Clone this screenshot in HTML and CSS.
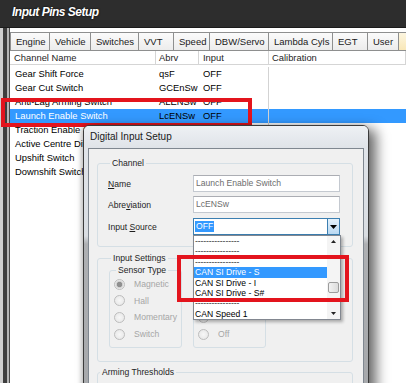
FILE: index.html
```html
<!DOCTYPE html>
<html lang="en">
<head>
<meta charset="utf-8">
<title>Input Pins Setup</title>
<link rel="stylesheet" href="styles.css">
</head>
<body>
<div class="app">
  <header class="topbar"><span class="apptitle">Input Pins Setup</span></header>
  <div class="main">
    <div class="frame-left"></div>
    <div class="content">
      <nav class="tabs">
        <span class="tab w-engine">Engine</span>
        <span class="tab w-vehicle">Vehicle</span>
        <span class="tab w-switches">Switches</span>
        <span class="tab w-vvt">VVT</span>
        <span class="tab w-speed">Speed</span>
        <span class="tab w-dbw">DBW/Servo</span>
        <span class="tab w-lambda">Lambda Cyls</span>
        <span class="tab w-egt">EGT</span>
        <span class="tab w-user">User</span>
        <span class="tab tab-hot w-more"></span>
      </nav>
      <div class="grid">
        <div class="ghead">
          <span class="hc h1">Channel Name</span>
          <span class="hc h2">Abrv</span>
          <span class="hc h3">Input</span>
          <span class="hc h4">Calibration</span>
        </div>
        <div class="grows">
          <div class="grow"><span class="c1">Gear Shift Force</span><span class="c2">qsF</span><span class="c3">OFF</span><span class="c4"></span></div>
          <div class="grow"><span class="c1">Gear Cut Switch</span><span class="c2">GCEnSw</span><span class="c3">OFF</span><span class="c4"></span></div>
          <div class="grow"><span class="c1">Anti-Lag Arming Switch</span><span class="c2">ALENSw</span><span class="c3">OFF</span><span class="c4"></span></div>
          <div class="grow selected"><span class="c1">Launch Enable Switch</span><span class="c2">LcENSw</span><span class="c3">OFF</span><span class="c4"></span></div>
          <div class="grow"><span class="c1">Traction Enable Switch</span><span class="c2"></span><span class="c3"></span><span class="c4"></span></div>
          <div class="grow"><span class="c1">Active Centre Diff Switch</span><span class="c2"></span><span class="c3"></span><span class="c4"></span></div>
          <div class="grow"><span class="c1">Upshift Switch</span><span class="c2"></span><span class="c3"></span><span class="c4"></span></div>
          <div class="grow"><span class="c1">Downshift Switch</span><span class="c2"></span><span class="c3"></span><span class="c4"></span></div>
        </div>
      </div>
    </div>
  </div>

  <div class="mark mark-row"></div>

  <section class="dialog">
    <div class="dlg-title">Digital Input Setup</div>
    <div class="dlg-client">
      <fieldset class="grp grp-channel">
        <legend>Channel</legend>
        <div class="frow r1"><span class="flabel"><u>N</u>ame</span><div class="tbox">Launch Enable Switch</div></div>
        <div class="frow r2"><span class="flabel">Abre<u>v</u>iation</span><div class="tbox">LcENSw</div></div>
        <div class="frow"><span class="flabel">Input <u>S</u>ource</span>
          <div class="combo">
            <span class="combo-val"><span class="sel">OFF</span></span>
            <span class="combo-btn"><svg width="7" height="4" viewBox="0 0 7 4"><path d="M0 0H7L3.5 4Z" fill="#000"/></svg></span>
          </div>
        </div>
      </fieldset>
      <fieldset class="grp grp-input">
        <legend>Input Settings</legend>
        <div class="subgroups">
          <fieldset class="grp sub">
            <legend>Sensor Type</legend>
            <div class="radio"><span class="rc checked"></span>Magnetic</div>
            <div class="radio"><span class="rc"></span>Hall</div>
            <div class="radio"><span class="rc"></span>Momentary</div>
            <div class="radio"><span class="rc"></span>Switch</div>
          </fieldset>
          <fieldset class="grp sub">
            <legend class="blank-legend"></legend>
            <div class="radio"><span class="rc"></span></div>
            <div class="radio"><span class="rc"></span></div>
            <div class="radio"><span class="rc"></span></div>
            <div class="radio"><span class="rc"></span>Off</div>
          </fieldset>
        </div>
      </fieldset>
      <fieldset class="grp grp-arm">
        <legend>Arming Thresholds</legend>
      </fieldset>
    </div>

    <div class="dropdown">
      <ul class="dd-items">
        <li class="dash">----------------</li>
        <li class="dash">----------------</li>
        <li class="dash">----------------</li>
        <li class="hl">CAN SI Drive - S</li>
        <li>CAN SI Drive - I</li>
        <li>CAN SI Drive - S#</li>
        <li class="dash">----------------</li>
        <li>CAN Speed 1</li>
      </ul>
      <div class="dd-scroll">
        <span class="sarrow"><svg width="5" height="3" viewBox="0 0 5 3"><path d="M0 3H5L2.5 0Z" fill="#222"/></svg></span>
        <span class="strack"><span class="thumb"></span></span>
        <span class="sarrow"><svg width="5" height="3" viewBox="0 0 5 3"><path d="M0 0H5L2.5 3Z" fill="#222"/></svg></span>
      </div>
    </div>
  </section>

  <div class="mark mark-list"></div>
</div>
</body>
</html>
```

FILE: styles.css
```css
* { box-sizing: border-box; margin: 0; padding: 0; }
html, body { width: 406px; height: 383px; overflow: hidden; background: #fff; }
body { font-family: Tahoma, "Liberation Sans", Arial, sans-serif; color: #111; }

.app { position: relative; width: 406px; height: 383px; overflow: hidden; }

/* top bar */
.topbar { height: 28px; background: #2d2d2d; border-bottom: 1px solid #1b1b1b; padding: 4px 0 0 12px; }
.apptitle { display: block; font: italic bold 12px/16px "Liberation Sans", Arial, sans-serif; letter-spacing: -0.5px; color: #fff; text-shadow: 0 0 2px #000; }

.main { display: flex; height: 355px; }
.frame-left { width: 10px; flex: none; background: linear-gradient(to right, #cfcfcf 0 3px, #3e3e3e 3px 7px, #b5b5b5 7px 9px, #4a4a4a 9px 10px); }
.content { flex: 1; min-width: 0; background: #fff; }

/* tabs */
.tabs { display: flex; height: 23px; padding-top: 4px; border-bottom: 1px solid #8e8f8f; white-space: nowrap; overflow: hidden; }
.tab { flex: none; height: 18px; margin-right: -1px; border: 1px solid #8e8f8f; border-bottom: none; background: linear-gradient(#fbfbfb, #ececec); font-size: 9.5px; line-height: 17px; padding-left: 5px; color: #1a1a1a; }
.tab-hot { background: linear-gradient(#fdf6e0, #f8e7b8); }
.w-engine { width: 40px; }
.w-vehicle { width: 42px; }
.w-switches { width: 49px; }
.w-vvt { width: 36px; }
.w-speed { width: 37px; }
.w-dbw { width: 60px; }
.w-lambda { width: 65px; }
.w-egt { width: 36px; }
.w-user { width: 32px; }
.w-more { width: 50px; }

/* grid */
.grid { font-size: 9.4px; }
.ghead, .grow { display: grid; grid-template-columns: 146px 43px 70px 1fr; }
.ghead { height: 14px; border-bottom: 1px solid #d5d5d5; line-height: 13px; color: #1e1e1e; }
.hc { border-right: 1px solid #d5d5d5; white-space: nowrap; overflow: hidden; }
.h1 { padding-left: 4px; }
.h2 { padding-left: 3px; }
.h3 { padding-left: 4px; }
.h4 { padding-left: 3px; }
.grows { padding-top: 2px; }
.grow { height: 14px; line-height: 14px; color: #000; }
.grow span { white-space: nowrap; overflow: hidden; }
.grow .c1 { padding-left: 5px; }
.grow .c2 { padding-left: 3px; }
.grow .c3 { padding-left: 4px; border-right: 1px solid #d3d3d3; }
.grow.selected { background: #3399ff; }
.grow.selected .c1 { color: #fff; }

/* red annotation boxes */
.mark { position: absolute; border: 4px solid #e3141d; }
.mark-row { left: 1px; top: 98px; width: 251px; height: 29px; }
.mark-list { left: 177px; top: 255px; width: 172px; height: 47px; }

/* dialog */
.dialog { position: absolute; left: 83px; top: 125px; width: 286px; height: 270px; border: 1px solid #3b3b3b; border-radius: 6px 6px 0 0; background: linear-gradient(to bottom, #e2e6eb 0, #d9dde2 110px, #aeb0b3 118px, #a6a8ab 100%); box-shadow: 7px 4px 13px rgba(0,0,0,.6), -2px 0 4px rgba(0,0,0,.18); font-size: 8.6px; color: #1e1e1e; }
.dlg-title { height: 22px; padding-left: 6px; font-size: 10px; line-height: 22px; color: #1a1a1a; border-radius: 5px 5px 0 0; background: linear-gradient(#eef1f4, #dfe3e8); }
.dlg-client { margin: 0 4px; height: 250px; border: 1px solid #7f8790; background: #f0f0f0; padding: 0 10px 0 8px; }

.grp { border: 1px solid #d5dfe5; border-radius: 3px; }
.grp legend { margin-left: 2px; padding: 0 2px; line-height: 11px; font-size: 8.6px; color: #1e1e1e; }
.grp legend.blank-legend { width: 0; height: 11px; padding: 0; }
.grp-channel { margin-top: 9px; padding: 6px 0 11px 10px; }
.frow { display: flex; align-items: center; height: 17px; }
.frow.r1 { margin-bottom: 4px; }
.frow.r2 { margin-bottom: 5px; }
.flabel { width: 85px; flex: none; }
.tbox { width: 147px; height: 17px; border: 1px solid #c4c9d0; border-top-color: #abadb3; background: #fff; color: #6d6d6d; padding-left: 2px; line-height: 15px; white-space: nowrap; }
.combo { width: 147px; height: 17px; display: flex; border: 1px solid #3c7fb1; background: #fff; }
.combo-val { flex: 1; padding: 2px 0 0 1px; }
.sel { display: inline-block; background: #3399ff; color: #fff; line-height: 11px; padding: 0 1px; }
.combo-btn { width: 12px; display: flex; align-items: center; justify-content: center; border-left: 1px solid #3c7fb1; background: linear-gradient(#e5f2fc, #b9d8f1); }

.grp-input { margin-top: 6px; padding: 0 0 13px 11px; }
.subgroups { display: flex; gap: 11px; margin-top: 1px; }
.sub { width: 73px; padding: 0 0 5px 4px; }
.radio { display: flex; align-items: center; height: 16.6px; color: #a6a6a6; white-space: nowrap; }
.rc { width: 11px; height: 11px; flex: none; margin-right: 9px; border: 1px solid #bdbdbd; border-radius: 50%; background: radial-gradient(circle, #f7f7f7, #e4e4e4); }
.rc.checked { background: radial-gradient(circle, #8f8f8f 0 2.4px, #cfcfcf 3px, #efefef 4.5px); }

.grp-arm { margin-top: 5px; height: 40px; }

/* dropdown list */
.dropdown { position: absolute; left: 109px; top: 109px; width: 148px; height: 85px; display: flex; border: 1px solid #828790; background: #fff; box-shadow: 2px 2px 3px rgba(0,0,0,.3); }
.dd-items { flex: 1; list-style: none; }
.dd-items li { height: 10.4px; line-height: 10.4px; padding-left: 1px; white-space: nowrap; color: #000; }
.dd-items li.dash { color: #333; letter-spacing: -0.1px; }
.dd-items li.hl { background: #3399ff; color: #fff; }
.dd-scroll { width: 13px; flex: none; display: flex; flex-direction: column; background: #f4f4f4; }
.sarrow { height: 11px; display: flex; align-items: center; justify-content: center; }
.strack { flex: 1; position: relative; }
.thumb { position: absolute; left: 1px; top: 35px; width: 11px; height: 11px; border: 1px solid #9c9c9c; border-radius: 2px; background: linear-gradient(to right, #f2f2f2, #dcdcdc); }
```
